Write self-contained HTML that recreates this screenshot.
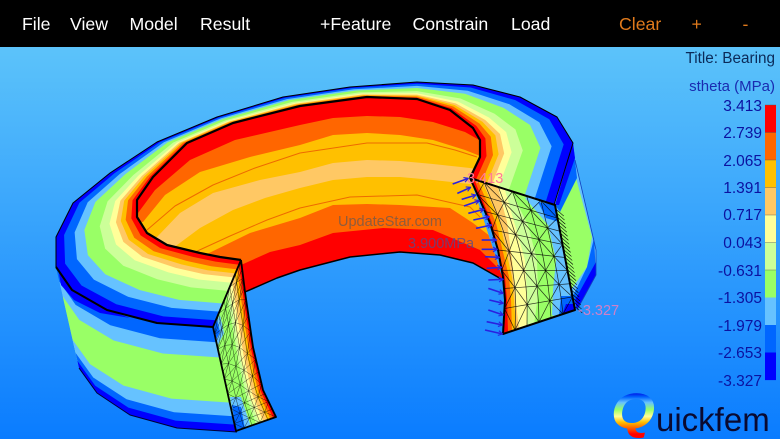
<!DOCTYPE html>
<html><head><meta charset="utf-8">
<style>
html,body{margin:0;padding:0;width:780px;height:439px;overflow:hidden;background:#000}
svg{display:block}
text{font-family:"Liberation Sans",sans-serif}
.m{fill:#fff;font-size:17.7px}
.o{fill:#e07a1c;font-size:17.7px}
.l{fill:#0c12a0;font-size:15.5px;text-anchor:end}
</style></head><body>
<svg id="s" xmlns="http://www.w3.org/2000/svg" width="780" height="439" viewBox="0 0 780 439">
<defs>
<linearGradient id="bg" x1="0" y1="47" x2="0" y2="439" gradientUnits="userSpaceOnUse"><stop offset="0" stop-color="#5cc3fa"/><stop offset="1" stop-color="#0a7cff"/></linearGradient>
<linearGradient id="q" x1="0" y1="392" x2="0" y2="434" gradientUnits="userSpaceOnUse">
<stop offset="0" stop-color="#0000e0"/><stop offset=".12" stop-color="#0066ff"/><stop offset=".25" stop-color="#66c2ff"/><stop offset=".42" stop-color="#99ff66"/><stop offset=".58" stop-color="#ffff99"/><stop offset=".72" stop-color="#ffc000"/><stop offset=".85" stop-color="#ff6600"/><stop offset="1" stop-color="#ff0000"/></linearGradient>
<clipPath id="wallc"><polygon points="137,205 137,200 153,177 187,143 233,123 300,106 367,97 417,99 450,110 473,128 480,140 480,157 470,178 503,280 473,263 440,255 400,252 350,257 300,270 277,278 245,292 241,260 200,253 167,245 147,233 137,217"/></clipPath>
<clipPath id="rf"><polygon points="470,178 555,205 575,310 503,334 505,300 503,277 498,250 490,223 480,200"/></clipPath>
<clipPath id="lf"><polygon points="241,260 213,327 236,431 276,417 263,390 253,347 245,292"/></clipPath>
</defs>
<rect width="780" height="439" fill="url(#bg)"/>
<rect width="780" height="47" fill="#000"/>
<g id="g"></g>
<text class="m" x="22" y="30">File</text>
<text class="m" x="70" y="30">View</text>
<text class="m" x="129.500" y="30">Model</text>
<text class="m" x="200" y="30">Result</text>
<text class="m" x="320" y="30">+Feature</text>
<text class="m" x="412.500" y="30">Constrain</text>
<text class="m" x="511" y="30">Load</text>
<text class="o" x="619" y="30">Clear</text>
<text class="o" x="691.500" y="30">+</text>
<text class="o" x="742.500" y="30">-</text>
<text x="775" y="63" style="font-size:15.300px;fill:#0b2a58;text-anchor:end">Title: Bearing</text>
<text x="775" y="91" style="font-size:15px;fill:#1a2bb0;text-anchor:end">stheta (MPa)</text>
<text class="l" x="762" y="111">3.413</text>
<text class="l" x="762" y="138">2.739</text>
<text class="l" x="762" y="166">2.065</text>
<text class="l" x="762" y="193">1.391</text>
<text class="l" x="762" y="220">0.717</text>
<text class="l" x="762" y="248">0.043</text>
<text class="l" x="762" y="276">-0.631</text>
<text class="l" x="762" y="303">-1.305</text>
<text class="l" x="762" y="331">-1.979</text>
<text class="l" x="762" y="358">-2.653</text>
<text class="l" x="762" y="386">-3.327</text>
<text x="338" y="226" style="font-size:14.500px;fill:#6a5a50;fill-opacity:.75">UpdateStar.com</text>
<text x="408" y="248" style="font-size:14.500px;fill:#5a4a88;fill-opacity:.8">3.900MPa</text>
<text x="467" y="183" style="font-size:14.500px;fill:#ff7a9a">3.413</text>
<text x="578" y="315" style="font-size:14.500px;fill:#d080c8">-3.327</text>
<text x="611" y="428" textLength="44" lengthAdjust="spacingAndGlyphs" style="font-size:50px;font-weight:bold;font-style:italic;fill:url(#q)">Q</text>
<text x="656" y="431" style="font-size:33px;fill:#0a0a30">uickfem</text>
</svg>
<script>
var NS="http://www.w3.org/2000/svg",G=document.getElementById("g");
function el(t,a,p){var e=document.createElementNS(NS,t);for(var k in a)e.setAttribute(k,a[k]);(p||G).appendChild(e);return e}
function poly(pts,fill,extra){var a={points:pts.map(function(p){return p[0]+","+p[1]}).join(" "),fill:fill};for(var k in extra||{})if(k!="parent")a[k]=extra[k];return el("polygon",a,extra&&extra.parent)}
function line(pts,stroke,w,p){return el("polyline",{points:pts.map(function(q){return q[0]+","+q[1]}).join(" "),fill:"none",stroke:stroke,"stroke-width":w,"stroke-linejoin":"round"},p)}
var R="#ff0000",O="#ff6600",Y="#ffc000",P="#ffc864",W="#ffff99",C="#ccff99",N="#99ff66",L="#66c2ff",B="#0066ff",D="#0000ff";
// legend
[R,O,Y,P,W,C,N,L,B,D].forEach(function(c,i){el("rect",{x:765,y:105+i*27.5,width:11,height:27.6,fill:c})});
for(var i=0;i<=10;i++)if(i<7)el("rect",{x:765,y:105+i*27.5-.4,width:11,height:.8,fill:"#555",opacity:.5});
// outer wall left
var T=[[56,267],[72,290],[107,310],[157,323],[213,327]],Bt=[[79,368],[97,393],[130,415],[177,428],[237,432]];
function lerp(a,b,t){return[a[0]+(b[0]-a[0])*t,a[1]+(b[1]-a[1])*t]}
[[0,B],[.145,L],[.29,N],[.72,L],[.85,B],[.93,D]].forEach(function(b){
 var up=T.map(function(p,i){return lerp(p,Bt[i],b[0])});
 poly(up.concat(Bt.slice().reverse()),b[1]);
});
poly([[58,268],[72,290],[107,310],[130,318],[100,313],[74,300],[61,285]],D);
line(Bt,"#000033",1);
// right wall
poly([[573,143],[575,160],[593,237],[596,250],[596,275],[577,310],[554,205]],L);
poly([[576,178],[592,237],[587,267],[566,297],[560,240],[556,215]],N);
poly([[573,143],[575,160],[577,178],[560,212],[555,205]],B);
poly([[573,143],[575,158],[559,205],[555,205]],D);
poly([[594,238],[596,275],[577,310],[573,296],[587,267]],B);
poly([[596,262],[596,275],[577,310],[575,300]],D);
line([[575,160],[593,237],[596,250],[596,275],[577,310]],"#1040c0",.8);
// inner wall
var g2=el("g",{"clip-path":"url(#wallc)"});
function band(pts,c){var a=pts[0],z=pts[pts.length-1];poly(pts.concat([[z[0]+40,330],[a[0]-30,330],[a[0]-30,a[1]]]),c,{parent:g2})}
el("rect",{x:120,y:80,width:400,height:230,fill:R},g2);
band([[130,205],[138,213],[155,190],[190,160],[235,140],[300,125],[333,118],[367,116],[400,117],[433,122],[465,132],[490,146]],O);
band([[132,222],[143,222],[165,195],[200,172],[250,157],[300,145],[333,135],[367,133],[400,135],[433,140],[465,150],[490,160]],Y);
band([[140,240],[157,237],[180,213],[213,193],[260,180],[300,172],[333,163],[367,160],[400,161],[433,164],[470,168],[495,174]],P);
band([[150,250],[173,248],[200,228],[233,210],[265,198],[300,188],[333,180],[367,177],[400,177],[433,180],[470,184],[495,192]],Y);
band([[180,260],[205,255],[250,233],[300,218],[333,205],[367,204],[400,205],[450,208],[473,223],[495,240]],O);
band([[220,270],[241,265],[270,252],[300,245],[333,233],[383,228],[433,230],[480,250],[500,270]],R);
line([[147,230],[175,206],[213,185],[255,168],[300,153],[367,143],[427,143],[455,150],[477,157]],"#ee6a00",1,g2);
line([[193,253],[230,236],[267,220],[300,208],[350,197],[417,195],[470,207],[480,217]],"#ee6a00",1,g2);
line([[245,292],[277,278],[300,270],[350,257],[400,252],[440,255],[473,263],[503,280]],"#000",1.5);
// top ring
var Q=[[241,260,213,327],[220,257,157,323],[200,253,107,310],[167,245,72,290],[147,233,56,267],[137,217,56,237],[137,200,73,203],[153,177,110,173],[187,143,157,142],[233,123,217,117],[300,106,283,97],[367,97,350,87],[417,99,417,82],[450,110,473,85],[473,128,520,97],[480,140,557,117],[480,157,573,143],[470,178,554,205]];
var inn=Q.map(function(q){return[q[0],q[1]]}),out=Q.map(function(q){return[q[2],q[3]]});
[[0,D],[.10,B],[.23,L],[.35,N],[.54,C],[.66,W],[.74,P],[.80,Y],[.86,O],[.93,R]].forEach(function(b){
 var u=out.map(function(p,i){return lerp(p,inn[i],b[0])});
 poly(u.concat(inn.slice().reverse()),b[1]);
});
line(out.slice(4),"#000",1);
line(out.slice(0,5),"#000",2);
line(inn,"#000",2.2);
// right face
var rf=el("g",{"clip-path":"url(#rf)"});
function fb(pts,c,p){poly(pts.concat([[620,340],[620,170]]),c,{parent:p})}
el("rect",{x:460,y:170,width:130,height:170,fill:R},rf);
fb([[474,179],[492,223],[505,277],[507,300],[508,332]],O,rf);
fb([[478,181],[496,223],[509,277],[511,300],[512,331]],Y,rf);
fb([[483,183],[500,223],[512,277],[514,300],[516,330]],P,rf);
fb([[498,188],[507,222],[512,260],[515,295],[519,329]],W,rf);
fb([[505,190],[515,225],[525,260],[527,295],[527,327]],C,rf);
fb([[512,193],[528,225],[537,260],[538,295],[534,325]],N,rf);
fb([[525,198],[548,225],[556,260],[553,290],[552,315]],L,rf);
poly([[538,202],[556,205],[559,222],[546,218]],B,{parent:rf});
poly([[561,296],[574,296],[576,311],[559,315]],B,{parent:rf});
poly([[566,304],[574,304],[576,311],[562,315]],D,{parent:rf});
// mesh helper
function lerpPath(path,t){var n=path.length-1,f=t*n,i=Math.min(Math.floor(f),n-1);return lerp(path[i],path[i+1],f-i)}
function mesh(Lp,Rp,nu,nv,w,parent,op){
 function pt(u,v){return lerp(lerpPath(Lp,v),lerpPath(Rp,v),u)}
 for(var v=0;v<=nv;v++){var a=[];for(var u=0;u<=nu;u++)a.push(pt(u/nu,v/nv));line(a,"#000",w,parent).setAttribute("opacity",op)}
 for(var u=0;u<=nu;u++){var a=[];for(var v=0;v<=nv;v++)a.push(pt(u/nu,v/nv));line(a,"#000",w,parent).setAttribute("opacity",op)}
 for(var u=0;u<nu;u++)for(var v=0;v<nv;v++){var a=(u+v)%2?[pt(u/nu,v/nv),pt((u+1)/nu,(v+1)/nv)]:[pt((u+1)/nu,v/nv),pt(u/nu,(v+1)/nv)];line(a,"#000",w,parent).setAttribute("opacity",op)}
}
mesh([[470,178],[480,200],[490,223],[498,250],[503,277],[505,300],[503,334]],[[555,205],[575,310]],6,8,.7,rf,.8);
line([[470,178],[555,205],[575,310],[503,334],[505,300],[503,277],[498,250],[490,223],[480,200],[470,178]],"#000",2);
// left face
var lf=el("g",{"clip-path":"url(#lf)"});
el("rect",{x:205,y:255,width:80,height:180,fill:N},lf);
var LL=[[213,327],[236,431]],RR=[[241,260],[245,292],[253,347],[263,390],[276,417]];
function uline(u){var a=[];for(var i=0;i<=8;i++){var v=i/8;a.push(lerp(lerpPath(LL,v),lerpPath(RR,v),u))}return a}
[[.5,C],[.58,W],[.68,P],[.78,Y],[.86,O],[.93,R]].forEach(function(b){poly(uline(b[0]).concat(RR.slice().reverse()),b[1],{parent:lf})});
poly([[213,327],[220,315],[224,333],[218,345]],L,{parent:lf});
poly([[213,327],[217,320],[220,332],[216,340]],B,{parent:lf});
poly([[230,397],[241,397],[251,427],[236,431]],L,{parent:lf});
poly([[232,405],[241,407],[245,429],[236,431]],B,{parent:lf});
mesh(LL,RR,5,14,.5,lf,.7);
line([[241,260],[213,327],[236,431],[276,417],[263,390],[253,347],[245,292],[241,260]],"#000",1.8);
// arrows
[[38,72,85,55],[52,100,92,82],[65,118,108,105],[72,138,118,122],[85,160,132,148],[100,180,148,170],[108,205,155,195],[125,240,170,240],[125,268,172,268],[135,290,178,292],[140,325,185,322],[145,360,190,358],[145,385,190,400],[148,420,190,430],[145,450,190,465],[140,485,188,495],[135,510,188,522]].forEach(function(a){
 var x1=440+a[0]/3,y1=160+a[1]/3,x2=440+a[2]/3,y2=160+a[3]/3,an=Math.atan2(y2-y1,x2-x1),h=5;
 line([[x1,y1],[x2,y2]],"#2a20e0",1.6);
 line([[x2-h*Math.cos(an-.5),y2-h*Math.sin(an-.5)],[x2,y2],[x2-h*Math.cos(an+.5),y2-h*Math.sin(an+.5)]],"#2a20e0",1.1);
});
// hatch
for(var i=1;i<26;i++){var p=lerp([555,205],[575,310],i/26);line([[p[0],p[1]],[p[0]+8,p[1]+7]],"#000",.6)}
</script>
</body></html>
